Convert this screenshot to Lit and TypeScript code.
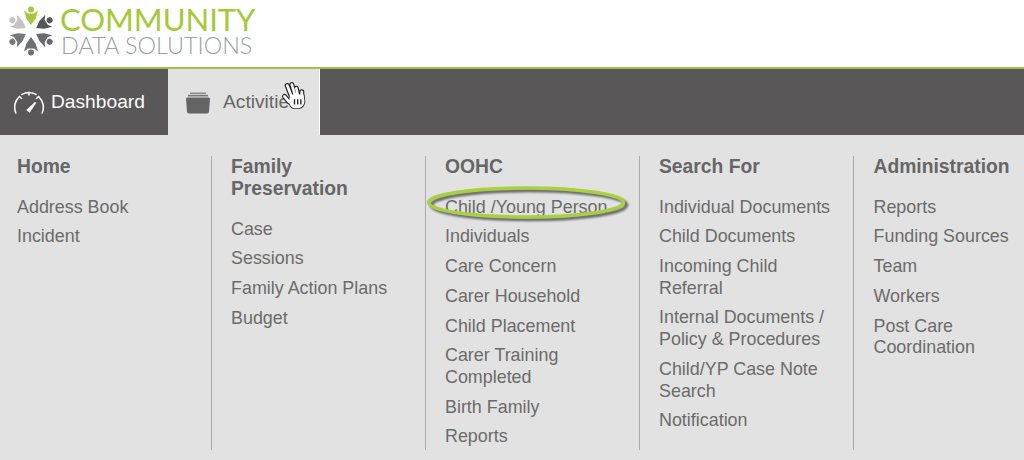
import { LitElement, html, css, svg } from "lit";
import { customElement } from "lit/decorators.js";

const columns: { title: string[]; items: string[][] }[] = [
  { title: ["Home"], items: [["Address Book"], ["Incident"]] },
  { title: ["Family", "Preservation"], items: [["Case"], ["Sessions"], ["Family Action Plans"], ["Budget"]] },
  {
    title: ["OOHC"],
    items: [["Child /Young Person"], ["Individuals"], ["Care Concern"], ["Carer Household"], ["Child Placement"], ["Carer Training", "Completed"], ["Birth Family"], ["Reports"]],
  },
  {
    title: ["Search For"],
    items: [["Individual Documents"], ["Child Documents"], ["Incoming Child", "Referral"], ["Internal Documents /", "Policy & Procedures"], ["Child/YP Case Note", "Search"], ["Notification"]],
  },
  { title: ["Administration"], items: [["Reports"], ["Funding Sources"], ["Team"], ["Workers"], ["Post Care", "Coordination"]] },
];

const figures: [number, string][] = [
  [0, "#a4c93a"],
  [60, "#55575a"],
  [120, "#6a6a6c"],
  [180, "#6f7072"],
  [240, "#77787a"],
  [300, "#c4c4c4"],
];

const fingers = [
  [8, 5, 13, 18],
  [13, 4, 17, 17],
  [18, 8, 20, 18],
  [24, 12, 24, 19],
  [5, 17, 10, 23],
];

@customElement("app-root")
export class AppRoot extends LitElement {
  static styles = css`
    :host {
      display: block;
      position: relative;
      width: 1024px;
      height: 460px;
      overflow: hidden;
      background: #e2e2e2;
      font-family: "Liberation Sans", Arial, sans-serif;
    }
    .header {
      height: 67px;
      background: #fff;
      border-bottom: 3px solid #a0c43c;
      display: flex;
      align-items: flex-start;
      gap: 4px;
      padding-left: 6px;
      box-sizing: content-box;
    }
    .mark {
      width: 50px;
      height: 50px;
      margin-top: 6px;
      flex: none;
    }
    .wordmark {
      display: flex;
      flex-direction: column;
      font-family: Lato, sans-serif;
      line-height: 1;
    }
    .community {
      font-size: 31px;
      color: #a4c93a;
      margin-top: 5px;
      height: 29px;
      line-height: 29px;
      font-weight: 400;
    }
    .data {
      font-size: 23.4px;
      font-weight: 300;
      color: #9aa1a6;
      height: 22px;
      line-height: 22px;
      margin-left: 1px;
    }
    .nav {
      height: 66px;
      background: #595757;
      display: flex;
      margin-top: -1px;
    }
    .tab {
      display: flex;
      align-items: center;
      font-size: 19.2px;
      box-sizing: border-box;
    }
    .tab.dash {
      width: 168px;
      color: #fff;
      padding-left: 14px;
      gap: 6px;
    }
    .tab.act {
      width: 152px;
      background: #e2e2e2;
      color: #666;
      padding-left: 17px;
      gap: 12px;
      border-right: 1px solid #fff;
    }
    .menu {
      display: flex;
      padding-top: 21px;
      height: 325px;
      box-sizing: border-box;
    }
    .col {
      width: 214px;
      flex: none;
      box-sizing: border-box;
      padding-left: 19px;
      height: 294px;
      border-right: 1px solid #a9a9a9;
      color: #6b6b6b;
    }
    .col:first-child {
      width: 212px;
      padding-left: 17px;
    }
    .col:last-child {
      border-right: none;
      width: 170px;
      padding-left: 19.5px;
    }
    .title {
      font-size: 19.3px;
      font-weight: 700;
      line-height: 22px;
      margin-bottom: 14.5px;
      color: #666;
    }
    .item {
      font-size: 17.9px;
      line-height: 21.65px;
      padding: 4.05px 0;
    }
    .ring {
      position: absolute;
      left: 415px;
      top: 175px;
      width: 225px;
      height: 55px;
    }
    .ring .shadow {
      filter: blur(1.2px);
      opacity: 0.8;
    }
    .cursor {
      position: absolute;
      left: 280px;
      top: 81px;
      width: 29px;
      height: 29px;
    }
  `;

  render() {
    return html`
      <div class="header">
        <svg class="mark" viewBox="-25 -25 50 50">
          ${figures.map(
            ([a, c]) => svg`<g transform="rotate(${a})" fill=${c}>
              <circle cx="0" cy="-21.5" r="3"></circle>
              <path d="M-7-20.5 L-3-17.5 L3-17.5 L7-20.5 L4.6-12.5 L0-6 L-4.6-12.5Z"></path>
            </g>`
          )}
        </svg>
        <div class="wordmark">
          <div class="community">COMMUNITY</div>
          <div class="data">DATA SOLUTIONS</div>
        </div>
      </div>
      <div class="nav">
        <div class="tab dash">
          <svg width="31" height="24" viewBox="0 0 31 24" fill="none" stroke="#fff" stroke-width="1.6" stroke-linecap="round">
            <path d="M1.8 23 A14.5 14.5 0 0 1 5.5 6.5 M8 4.4 A14.5 14.5 0 0 1 22 4.4 M24.5 6.5 A14.5 14.5 0 0 1 28.2 23"></path>
            <path d="M5.5 6.5 l2 2 M24.5 6.5 l-2 2 M15 2.5 v2.5"></path>
            <path d="M13.5 20 L21.5 12.5 L15.5 21.5Z" fill="#fff"></path>
          </svg>
          <span>Dashboard</span>
        </div>
        <div class="tab act">
          <svg width="26" height="23" viewBox="0 0 26 23">
            <path d="M5 1.5h16v1.5H5z" fill="#8a8a8a"></path>
            <path d="M3 3.8h20v1.7H3z" fill="#777"></path>
            <path d="M1 8 Q1 6.5 2.5 6.5 H23.5 Q25 6.5 25 8 L24 20.5 Q24 22.5 22 22.5 H4 Q2 22.5 2 20.5Z" fill="#646464"></path>
          </svg>
          <span>Activities</span>
        </div>
      </div>
      <div class="menu">
        ${columns.map(
          (c) => html`<div class="col">
            <div class="title">${c.title.map((t) => html`<div>${t}</div>`)}</div>
            ${c.items.map((i) => html`<div class="item">${i.map((t) => html`<div>${t}</div>`)}</div>`)}
          </div>`
        )}
      </div>
      <svg class="ring" viewBox="0 0 225 55" fill="none">
        <ellipse class="shadow" cx="114" cy="30" rx="97.5" ry="14.5" stroke="#444" stroke-width="3.5"></ellipse>
        <ellipse cx="111" cy="27.5" rx="97.5" ry="14.5" stroke="#a9d03f" stroke-width="3.5"></ellipse>
      </svg>
      <svg class="cursor" viewBox="0 0 32 32" stroke-linecap="round">
        ${fingers.map(
          ([x1, y1, x2, y2]) => svg`<line x1=${x1} y1=${y1} x2=${x2} y2=${y2} stroke="#222" stroke-width="5.6"></line>`
        )}
        <path d="M11 15 H26 L27 23 Q26 29 21 30 H15 Q12 29 10 24Z" fill="#222" stroke="#222" stroke-width="1.8" stroke-linejoin="round"></path>
        ${fingers.map(
          ([x1, y1, x2, y2]) => svg`<line x1=${x1} y1=${y1} x2=${x2} y2=${y2} stroke="#fff" stroke-width="3"></line>`
        )}
        <path d="M11 15 H26 L27 23 Q26 29 21 30 H15 Q12 29 10 24Z" fill="#fff"></path>
        <path d="M16 20v6M19.5 20v6M23 20v6" stroke="#222" stroke-width="1.5" stroke-linecap="butt"></path>
      </svg>
    `;
  }
}
